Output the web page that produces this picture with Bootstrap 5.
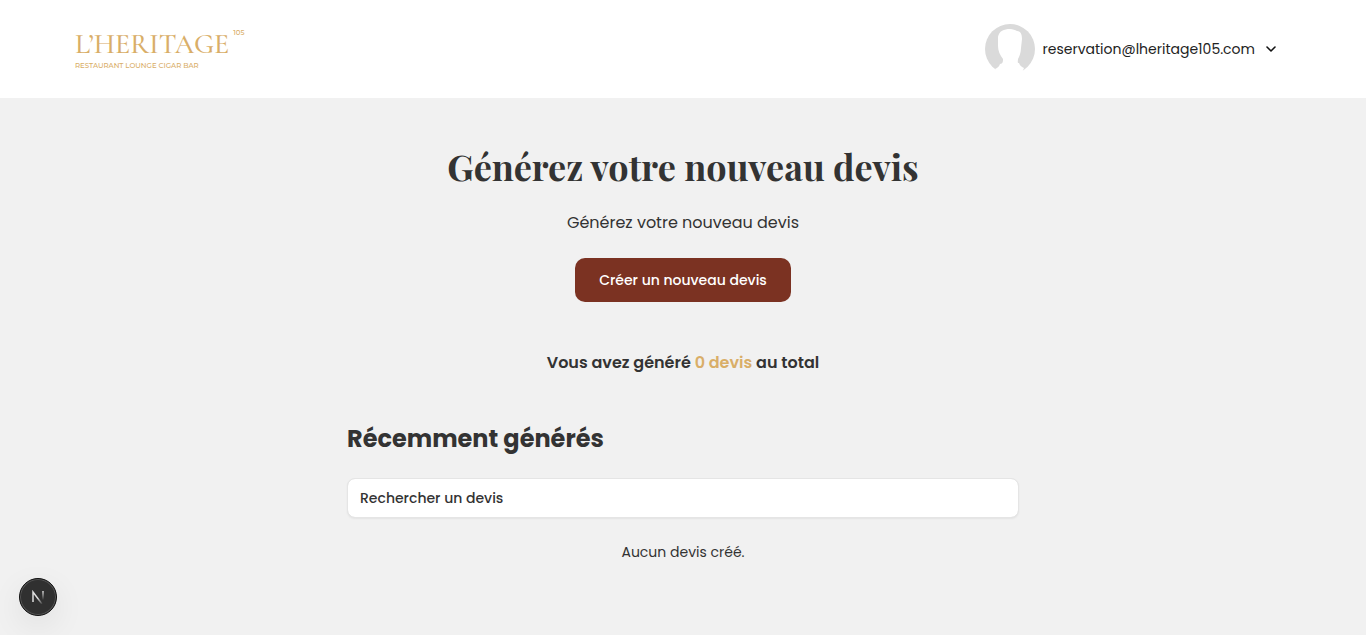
<!DOCTYPE html>
<html lang="fr">
<head>
<meta charset="utf-8">
<meta name="viewport" content="width=device-width, initial-scale=1">
<title>L'Heritage 105 – Devis</title>
<link href="https://cdn.jsdelivr.net/npm/bootstrap@5.3.0/dist/css/bootstrap.min.css" rel="stylesheet">
<style>
  :root { --ink: #333333; --gold: #d9ae68; --brick: #7b3222; }
  body { font-family: Poppins, Inter, sans-serif; font-size: 14px; line-height: 20px; color: var(--ink); background: #f1f1f1; }
  .site-bar { padding: 24px 87px 24px 75px; }
  .brand { color: var(--gold); text-decoration: none; }
  .brand-name { font: 500 28px/34px "Cormorant Garamond", "Liberation Serif", serif; }
  .brand-no { font: 500 7px/12px Montserrat, Poppins, sans-serif; }
  .brand-tag { font: 500 7px/10px Montserrat, Poppins, sans-serif; }
  .account { --bs-btn-font-size: 14px; color: #222; line-height: 24px; }
  .content { max-width: 704px; padding: 44px 16px; }
  .page-title { font: bold 36px/48px "Playfair Display", "Liberation Serif", serif; margin-bottom: 20px; }
  .intro { font-size: 16px; line-height: 26px; margin-bottom: 22px; }
  .btn-create { --bs-btn-color: #fff; --bs-btn-bg: var(--brick); --bs-btn-hover-color: #fff; --bs-btn-hover-bg: #64281b; --bs-btn-font-size: 14px; --bs-btn-font-weight: 500; --bs-btn-line-height: 20px; --bs-btn-padding-x: 23px; --bs-btn-padding-y: 11px; --bs-btn-border-radius: 10px; }
  .total { font-size: 16px; line-height: 26px; margin: 48px 0; }
  .gold { color: var(--gold); }
  .section-title { font-size: 24px; line-height: 30px; margin-bottom: 24px; }
  .search { height: 40px; padding: 8px 12px; font-size: 14px; font-weight: 500; border-color: #e5e5e5; border-radius: 8px; box-shadow: 0 1px 2px rgba(0,0,0,.06); }
  .search::placeholder { color: var(--ink); opacity: 1; }
  .dev-badge { left: 19px; bottom: 19px; width: 38px; height: 38px; background: #303030; border: 1px solid #111; box-shadow: inset 0 0 0 1px #555, 0 10px 32px rgba(0,0,0,.08); }
</style>
</head>
<body>
<header class="bg-white">
  <nav class="site-bar d-flex flex-wrap align-items-center justify-content-between" aria-label="Principale">
    <a class="brand d-flex align-items-start gap-1" href="#">
      <span class="d-flex flex-column"><span class="brand-name">L’HERITAGE</span><span class="brand-tag">RESTAURANT LOUNGE CIGAR BAR</span></span>
      <span class="brand-no">105</span>
    </a>
    <button type="button" class="account btn p-0 border-0 d-flex align-items-center gap-2" aria-haspopup="true">
      <svg width="50" height="50" viewBox="0 0 50 50" aria-hidden="true">
        <circle cx="25" cy="25" r="25" fill="#dadada"/>
        <path d="M13 13C14 7 19 5 25 5c3 0 5 1 7 2 4 0 5 4 5 8l-1 9c0 5-2 9-3 11 0 2-1 4 1 4 1 3 3 4 5 5L36 51H14L10 45c2-1 4-2 5-5 3 0 3-3 3-5-3-4-5-8-5-13z" fill="#fff"/>
      </svg>
      <span>reservation@lheritage105.com</span>
      <svg width="16" height="16" viewBox="0 0 16 16" fill="none" stroke="#111" stroke-width="1.6" stroke-linecap="round" stroke-linejoin="round" aria-hidden="true"><path d="m4 6 4 4 4-4"/></svg>
    </button>
  </nav>
</header>
<main class="content container-fluid mx-auto text-center">
  <h1 class="page-title">Générez votre nouveau devis</h1>
  <p class="intro">Générez votre nouveau devis</p>
  <button type="button" class="btn btn-create">Créer un nouveau devis</button>
  <p class="total fw-semibold">Vous avez généré <span class="gold">0 devis</span> au total</p>
  <h2 class="section-title fw-bold text-start">Récemment générés</h2>
  <input type="search" class="form-control search" placeholder="Rechercher un devis" aria-label="Rechercher un devis">
  <p class="mt-4 mb-0">Aucun devis créé.</p>
</main>
<button type="button" class="dev-badge position-fixed rounded-circle p-0 d-flex align-items-center justify-content-center" aria-label="Outils">
  <svg width="14" height="14" viewBox="0 0 14 14" fill="none" stroke-width="1.5" aria-hidden="true">
    <defs>
      <linearGradient id="fadeA" x1="2" y1="2" x2="12" y2="14" gradientUnits="userSpaceOnUse"><stop offset=".5" stop-color="#ddd"/><stop offset="1" stop-color="#ddd" stop-opacity="0"/></linearGradient>
      <linearGradient id="fadeB" x1="0" y1="1" x2="0" y2="10" gradientUnits="userSpaceOnUse"><stop stop-color="#ddd"/><stop offset="1" stop-color="#ddd" stop-opacity="0"/></linearGradient>
    </defs>
    <path d="M2 12V2l9 12" stroke="url(#fadeA)"/><path d="M12 1v9" stroke="url(#fadeB)"/>
  </svg>
</button>
<script src="https://cdn.jsdelivr.net/npm/bootstrap@5.3.0/dist/js/bootstrap.bundle.min.js"></script>
</body>
</html>
